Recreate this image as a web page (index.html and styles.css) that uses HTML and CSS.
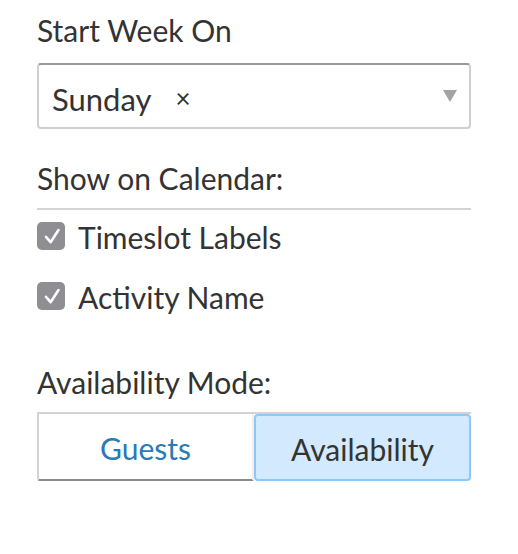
FILE: index.html
```html
<!DOCTYPE html>
<html>
<head>
<meta charset="utf-8">
<link rel="stylesheet" href="styles.css">
</head>
<body>
<div class="panel">
  <div class="label first">Start Week On</div>
  <div class="select">
    <span class="value">Sunday</span>
    <span class="clear">×</span>
    <span class="arrow"></span>
  </div>
  <div class="label section">Show on Calendar:</div>
  <div class="divider"></div>
  <div class="check"><span class="box"><svg viewBox="0 0 28 28" width="28" height="28"><path d="M9 14.8 L13.6 20.2 L21.5 8" fill="none" stroke="#fff" stroke-width="2.6" stroke-linecap="round" stroke-linejoin="round"/></svg></span><span class="ctext">Timeslot Labels</span></div>
  <div class="check"><span class="box"><svg viewBox="0 0 28 28" width="28" height="28"><path d="M9 14.8 L13.6 20.2 L21.5 8" fill="none" stroke="#fff" stroke-width="2.6" stroke-linecap="round" stroke-linejoin="round"/></svg></span><span class="ctext">Activity Name</span></div>
  <div class="label mode">Availability Mode:</div>
  <div class="group">
    <div class="btn guests">Guests</div>
    <div class="btn active">Availability</div>
  </div>
</div>
</body>
</html>
```
FILE: styles.css
```css
html, body {
  margin: 0;
  padding: 0;
  background: #fff;
}
body {
  font-family: Lato, "Open Sans", sans-serif;
  color: #333;
}
.panel {
  width: 434px;
  margin-left: 37px;
}
.label {
  font-size: 30px;
  line-height: 32px;
}
.first {
  padding-top: 14px;
}
.select {
  margin-top: 17px;
  box-sizing: border-box;
  height: 66px;
  border: 2px solid #cfcfcf;
  border-top-color: #9a9a9a;
  border-radius: 4px;
  display: flex;
  align-items: center;
  padding-left: 13px;
  padding-right: 12px;
  font-size: 31px;
}
.value {
  padding-top: 5px;
}
.clear {
  margin-left: 24px;
  font-size: 26px;
  padding-top: 3px;
}
.arrow {
  margin-left: auto;
  width: 0;
  height: 0;
  border-left: 7px solid transparent;
  border-right: 7px solid transparent;
  border-top: 12px solid #a3a3a3;
}
.section {
  margin-top: 33px;
}
.divider {
  height: 2px;
  background: #d4d4d4;
  margin-top: 14px;
}
.check {
  display: flex;
  align-items: center;
  height: 28px;
  margin-top: 12px;
  margin-bottom: 20px;
}
.check + .check {
  margin-top: 32px;
}
.box {
  width: 28px;
  height: 28px;
  border-radius: 5px;
  background: #8e8e93;
  display: block;
}
.box svg {
  display: block;
}
.ctext {
  font-size: 30px;
  margin-left: 13px;
  padding-top: 1px;
}
.mode {
  margin-top: 56px;
}
.group {
  margin-top: 14px;
  display: flex;
  border-top: 2px solid #d6d2d2;
  height: 69px;
  box-sizing: border-box;
}
.btn {
  flex: 1;
  display: flex;
  align-items: center;
  justify-content: center;
  font-size: 30px;
  box-sizing: border-box;
  padding-top: 3px;
}
.guests {
  color: #2a7ab9;
  border-left: 2px solid #d6d2d2;
  border-bottom: 2px solid #8a8a8a;
  border-bottom-left-radius: 3px;
  border-right: 2px solid #f3eeee;
}
.active {
  background: #d3e9fd;
  border: 2px solid #8fc7f7;
  border-radius: 4px;
}
```
